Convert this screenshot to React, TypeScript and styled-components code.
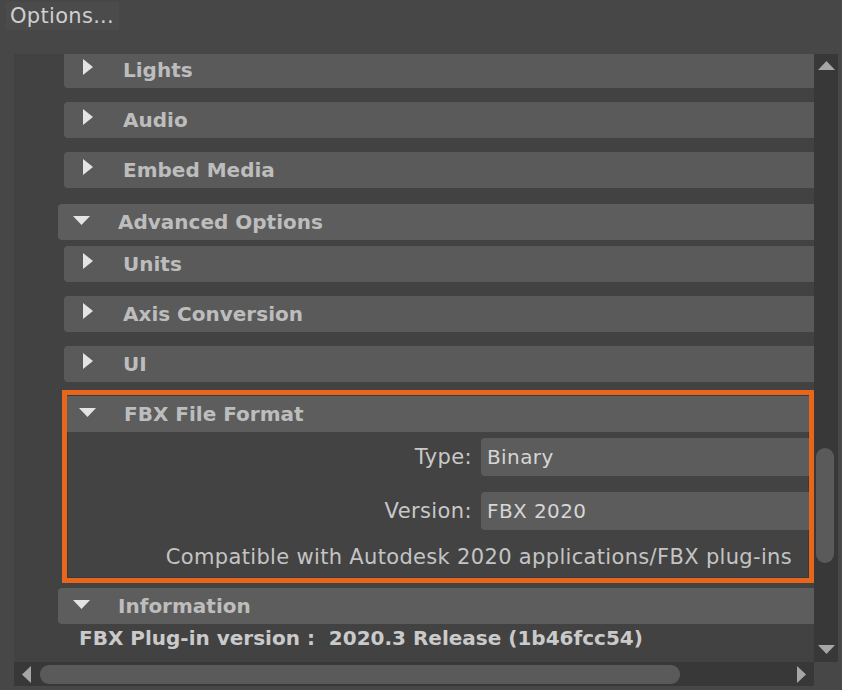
import React from 'react';
import styled, { createGlobalStyle } from 'styled-components';

const GlobalStyle = createGlobalStyle`
  html, body {
    margin: 0;
    padding: 0;
    background: #474747;
  }
  body {
    font-family: 'DejaVu Sans', 'Liberation Sans', sans-serif;
  }
`;

const Window = styled.div`
  width: 842px;
  height: 690px;
  background: #474747;
  display: flex;
  flex-direction: column;
  overflow: hidden;
`;

const TitleBar = styled.div`
  height: 32px;
  display: flex;
  align-items: center;
  padding-left: 6px;
`;

const Title = styled.span`
  background: #4b4b4b;
  color: #cfcfcf;
  font-size: 21px;
  letter-spacing: 0.3px;
  line-height: 28px;
  padding: 0 5px 0 4px;
`;

const ScrollFrame = styled.div`
  margin: 22px 4px 0 14px;
  display: grid;
  grid-template-columns: 800px 24px;
  grid-template-rows: 608px 24px;
`;

const Viewport = styled.div`
  background: #424242;
  overflow: hidden;
  position: relative;
`;

// scroll offset of the panel: the first row is scrolled up a little
const Content = styled.div<{ $scrollTop: number }>`
  width: 1000px;
  margin-top: ${(p) => -p.$scrollTop}px;
  display: flex;
  flex-direction: column;
`;

const Corner = styled.div`
  background: #474747;
`;

const VScroll = styled.div`
  background: #383838;
  display: flex;
  flex-direction: column;
  align-items: center;
  padding: 7px 0 8px;
`;

const HScroll = styled.div`
  background: #383838;
  display: flex;
  align-items: center;
  padding: 0 8px 0 8px;
`;

const Track = styled.div<{ $vertical?: boolean }>`
  flex: 1;
  align-self: stretch;
  display: flex;
  flex-direction: ${(p) => (p.$vertical ? 'column' : 'row')};
  padding: ${(p) => (p.$vertical ? '0 2px' : '3px 0 2px')};
`;

const Thumb = styled.div<{ $vertical?: boolean }>`
  background: #5a5a5a;
  border-radius: 9px;
  ${(p) => (p.$vertical ? 'width: 18px;' : 'height: 19px;')}
`;

const Arrow = styled.svg`
  display: block;
  flex: none;
  fill: #a6a6a6;
`;

const Group = styled.div<{ $indent: number; $gap: number }>`
  margin-left: ${(p) => p.$indent}px;
  margin-top: ${(p) => p.$gap}px;
  display: flex;
  flex-direction: column;
`;

const Header = styled.div<{ $open?: boolean; $square?: boolean }>`
  height: 36px;
  background: ${(p) => (p.$open ? '#5d5d5d' : '#5a5a5a')};
  border-radius: ${(p) => (p.$square ? 0 : 4)}px;
  display: flex;
  align-items: center;
  color: #bdbdbd;
  font-weight: bold;
  font-size: 20px;
  flex: none;
`;

const Toggle = styled.span<{ $open?: boolean; $pad?: number }>`
  width: ${(p) => (p.$pad !== undefined ? 57 : p.$open ? 60 : 59)}px;
  padding-left: ${(p) => (p.$pad !== undefined ? p.$pad : p.$open ? 15 : 19)}px;
  box-sizing: border-box;
  display: flex;
  align-items: center;
  flex: none;
`;

const Highlight = styled.div`
  width: 752px;
  border: 5px solid #e8661c;
  box-sizing: border-box;
  padding-top: 1px;
  background: #434343;
  overflow: hidden;
  box-shadow: inset 0 0 0 1px #393939;
`;

const FieldStack = styled.div`
  display: flex;
  flex-direction: column;
  gap: 16px;
  padding-top: 6px;
`;

const FieldRow = styled.div`
  display: flex;
  align-items: center;
  gap: 9px;
`;

const Label = styled.div`
  width: 405px;
  text-align: right;
  color: #c8c8c8;
  font-size: 21px;
  letter-spacing: 0.4px;
  flex: none;
`;

const Field = styled.div`
  flex: none;
  width: 360px;
  height: 38px;
  background: #5c5c5c;
  border-radius: 4px;
  display: flex;
  align-items: center;
  padding-left: 6px;
  box-sizing: border-box;
  color: #d6d6d6;
  font-size: 20px;
  letter-spacing: 0.4px;
`;

const Note = styled.div`
  width: 725px;
  text-align: right;
  color: #c4c4c4;
  font-size: 21px;
  letter-spacing: 0.33px;
  line-height: 24px;
  padding: 15px 0 9px;
  white-space: nowrap;
`;

const InfoLine = styled.div`
  color: #cacaca;
  font-size: 20px;
  font-weight: bold;
  line-height: 24px;
  padding: 2px 0 0 21px;
  white-space: pre;
`;

const RightTri = () => (
  <svg width="10" height="16" viewBox="0 0 10 16" style={{ marginTop: -6 }}>
    <polygon points="0,0 10,8 0,16" fill="#e4e4e4" />
  </svg>
);

const DownTri = () => (
  <svg width="17" height="9" viewBox="0 0 17 9" style={{ marginTop: -4 }}>
    <polygon points="0,0 17,0 8.5,9" fill="#e4e4e4" />
  </svg>
);

type SectionProps = {
  title: string;
  open?: boolean;
  indent: number;
  gap: number;
  children?: React.ReactNode;
};

const Section = ({ title, open, indent, gap, children }: SectionProps) => (
  <Group $indent={indent} $gap={gap}>
    <Header $open={open}>
      <Toggle $open={open}>{open ? <DownTri /> : <RightTri />}</Toggle>
      {title}
    </Header>
    {children}
  </Group>
);

const App = () => {
  return (
    <>
      <GlobalStyle />
      <Window>
        <TitleBar>
          <Title>Options...</Title>
        </TitleBar>
        <ScrollFrame>
          <Viewport>
            <Content $scrollTop={2}>
              <Section title="Lights" indent={50} gap={0} />
              <Section title="Audio" indent={50} gap={14} />
              <Section title="Embed Media" indent={50} gap={14} />
              <Section title="Advanced Options" indent={44} gap={16} open />
              <Section title="Units" indent={50} gap={6} />
              <Section title="Axis Conversion" indent={50} gap={14} />
              <Section title="UI" indent={50} gap={14} />
              <Group $indent={48} $gap={8}>
                <Highlight>
                  <Header $open $square>
                    <Toggle $open $pad={12}>
                      <DownTri />
                    </Toggle>
                    FBX File Format
                  </Header>
                  <FieldStack>
                    <FieldRow>
                      <Label>Type:</Label>
                      <Field>Binary</Field>
                    </FieldRow>
                    <FieldRow>
                      <Label>Version:</Label>
                      <Field>FBX 2020</Field>
                    </FieldRow>
                  </FieldStack>
                  <Note>Compatible with Autodesk 2020 applications/FBX plug-ins</Note>
                </Highlight>
              </Group>
              <Section title="Information" indent={44} gap={5} open>
                <InfoLine>FBX Plug-in version :  2020.3 Release (1b46fcc54)</InfoLine>
              </Section>
            </Content>
          </Viewport>
          <VScroll>
            <Arrow width="17" height="9" viewBox="0 0 17 9">
              <polygon points="8.5,0 17,9 0,9" />
            </Arrow>
            <Track $vertical>
              <div style={{ height: 378, flex: 'none' }} />
              <Thumb $vertical style={{ height: 115 }} />
            </Track>
            <Arrow width="17" height="9" viewBox="0 0 17 9">
              <polygon points="0,0 17,0 8.5,9" />
            </Arrow>
          </VScroll>
          <HScroll>
            <Arrow width="9" height="17" viewBox="0 0 9 17">
              <polygon points="9,0 9,17 0,8.5" />
            </Arrow>
            <Track>
              <div style={{ width: 9, flex: 'none' }} />
              <Thumb style={{ width: 640 }} />
            </Track>
            <Arrow width="9" height="17" viewBox="0 0 9 17">
              <polygon points="0,0 9,8.5 0,17" />
            </Arrow>
          </HScroll>
          <Corner />
        </ScrollFrame>
      </Window>
    </>
  );
};

export default App;
